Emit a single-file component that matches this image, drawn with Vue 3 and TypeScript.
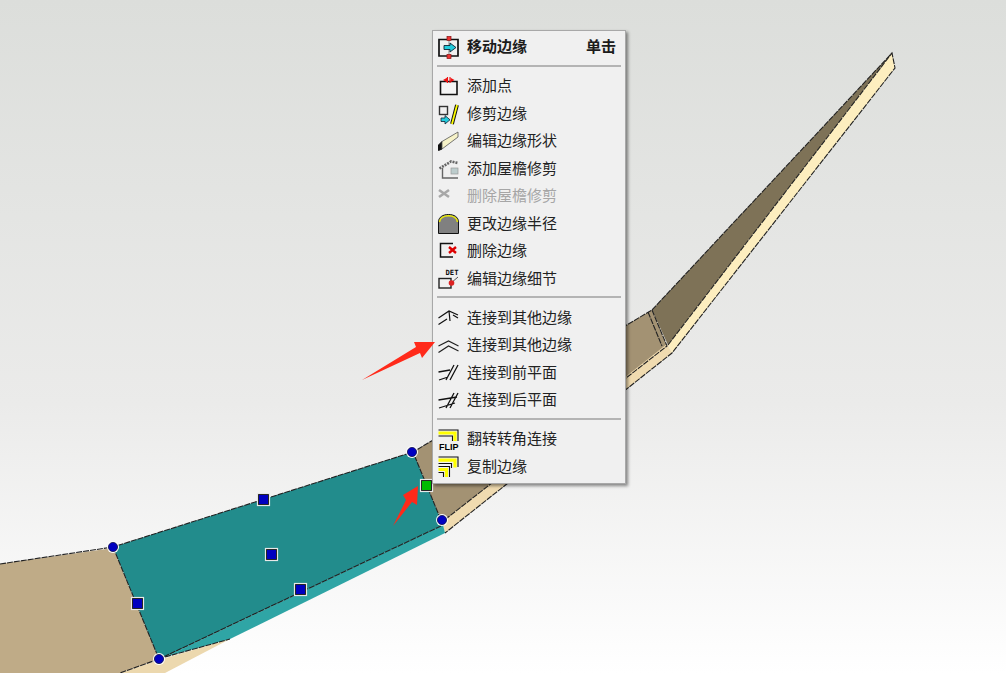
<script setup lang="ts">
type Row = { label?: string; icon?: string; hint?: string; head?: boolean; off?: boolean; sep?: boolean }

const faces = [
  { points: '0,564 113,548 159,659 120,673 0,673', fill: '#bfab87' },
  { points: '120,673 159,660 230,639 165,673', fill: '#ecd8ae' },
  { points: '413,452 652,310 667,346 442,522', fill: '#a39273' },
  { points: '442,522 667,344 672,353 445,533', fill: '#f0dbb0' },
  { points: '652,310 892,53 668,345', fill: '#7e7257' },
  { points: '668,345 892,53 895,68 672,353', fill: '#fdeebf' },
  { points: '165,657 443,525 445,533 230,639', fill: '#2fa5a5' },
  { points: '113,547 413,452 443,525 165,657 159,659', fill: '#228c8c' },
]

const edges = [
  '0,564 113,547 413,452 652,310 892,53 895,68 672,353 445,533',
  '113,547 159,659 443,525 413,452',
  '652,310 667,346 442,522',
  '668,345 892,53',
  '159,659 120,673',
  '648,312 662,346',
  '165,657 230,639',
]

const dots = [
  [113, 547],
  [412, 452],
  [442, 520],
  [159, 659],
]

const squares = [
  { x: 263, y: 499, fill: '#0000c0' },
  { x: 271, y: 554, fill: '#0000c0' },
  { x: 300, y: 589, fill: '#0000c0' },
  { x: 137, y: 603, fill: '#0000c0' },
  { x: 426, y: 485, fill: '#00bb00' },
]

const icons: Record<string, string> = {
  move: `<path d="M15 4V21" stroke="#888"/><path d="M13 4.5H5V21H13M17 4.5H24V21H17" fill="none" stroke="#111" stroke-width="1.7"/><rect x="13" y="1.5" width="4" height="4" fill="#e33" stroke="#811" stroke-width=".7"/><rect x="13" y="19.5" width="4" height="4" fill="#e33" stroke="#811" stroke-width=".7"/><path d="M10 10.5H16V8L22 12.5 16 17V14.5H10Z" fill="#2cd" stroke="#123" stroke-width=".9"/>`,
  add: `<path d="M6.5 7.5H23V20.5H6.5Z" fill="#f4f4f4" stroke="#111" stroke-width="1.6"/><path d="M13.5 3V9M16 3V9" stroke="#e11" stroke-width="1.1"/><path d="M9 6L13 3.8V8.2ZM20.5 6L16.5 3.8V8.2Z" fill="#e11"/>`,
  trim: `<rect x="5.5" y="4.5" width="8" height="8" fill="none" stroke="#333" stroke-width="1.4"/><path d="M7 16H11V13.5L16 17.8 11 22V19.5H7Z" fill="#2cd" stroke="#123" stroke-width=".8"/><path d="M23 3L18 22" stroke="#111" stroke-width="3.8"/><path d="M23 3L18 22" stroke="#ff0" stroke-width="1.8"/>`,
  shape: `<path d="M4.5 16L8 12.5V20L4.5 21.5Z" fill="#111" stroke="#111"/><path d="M8 12.5L24 3V8L8 20Z" fill="#f6f2c8" stroke="#555" stroke-width=".8"/>`,
  eave: `<path d="M5.5 11.5L17 4.5 24 6" fill="none" stroke="#666" stroke-width="2.6" stroke-dasharray="2 1"/><path d="M8.5 11V21H24" fill="none" stroke="#666" stroke-width="1.4"/><rect x="17" y="11" width="7" height="6" fill="#bccccc" stroke="#999" stroke-width=".7"/>`,
  cross: `<path d="M5 6L15 13M15 6L5 13" stroke="#a8a8a8" stroke-width="2.6"/>`,
  radius: `<path d="M4.5 21.5V10C4.5 5 9 2.5 14.5 2.5S24.5 5 24.5 10V21.5Z" fill="#808080" stroke="#111" stroke-width="1"/><path d="M5.5 10C6 6 10 3.8 14.5 3.8S23 6 23.5 10" fill="none" stroke="#ee0" stroke-width="1.5"/>`,
  remove: `<path d="M19 4.5H6.5V18H19" fill="none" stroke="#111" stroke-width="1.5"/><path d="M15 8L22 14M22 8L15 14" stroke="#d00" stroke-width="2.4"/>`,
  detail: `<text x="11.5" y="8" class="tiny">DET</text><rect x="5" y="11.5" width="12" height="9.5" fill="none" stroke="#222" stroke-width="1.4"/><path d="M17 16L24 10" stroke="#555"/><circle cx="17.5" cy="16" r="2.8" fill="#d22"/>`,
  other1: `<path d="M4.5 13L15 6 24 10M15 6L16 16M19 10L24 13M4.5 19.5L13 14" fill="none" stroke="#111" stroke-width="1.2"/>`,
  other2: `<path d="M4.5 13L14.5 8 24.5 13M4.5 19.5L14.5 13 24.5 18" fill="none" stroke="#222" stroke-width="1.2"/>`,
  front: `<path d="M24 5L16 20M20 5L12 20M4.5 12L16 10M5 20L14 17" fill="none" stroke="#111" stroke-width="1.3"/>`,
  back: `<path d="M24 5L16 20M20 5L12 20M4.5 12L23 9M5 20L21 15" fill="none" stroke="#111" stroke-width="1.3"/>`,
  flip: `<path d="M4.5 3H24V14M4.5 9H18.5V14" stroke="#111" fill="none" stroke-width="1.1"/><path d="M4.5 6H21V14" fill="none" stroke="#ff0" stroke-width="3.2"/><text x="14.8" y="22.5" class="flip">FLIP</text>`,
  copy: `<path d="M4.5 3H24V13M4.5 9.5H17.5V14" fill="none" stroke="#111" stroke-width="1.1"/><path d="M4.5 6.2H21V13.5" fill="none" stroke="#ff0" stroke-width="3.2"/><path d="M4.5 12.5H15.5V23M4.5 18.5H9.5V23" fill="none" stroke="#111" stroke-width="1.1"/><path d="M4.5 15.5H12.5V23" fill="none" stroke="#ff0" stroke-width="3.2"/>`,
}

const rows: Row[] = [
  { label: '移动边缘', icon: 'move', hint: '单击', head: true },
  { sep: true },
  { label: '添加点', icon: 'add' },
  { label: '修剪边缘', icon: 'trim' },
  { label: '编辑边缘形状', icon: 'shape' },
  { label: '添加屋檐修剪', icon: 'eave' },
  { label: '删除屋檐修剪', icon: 'cross', off: true },
  { label: '更改边缘半径', icon: 'radius' },
  { label: '删除边缘', icon: 'remove' },
  { label: '编辑边缘细节', icon: 'detail' },
  { sep: true },
  { label: '连接到其他边缘', icon: 'other1' },
  { label: '连接到其他边缘', icon: 'other2' },
  { label: '连接到前平面', icon: 'front' },
  { label: '连接到后平面', icon: 'back' },
  { sep: true },
  { label: '翻转转角连接', icon: 'flip' },
  { label: '复制边缘', icon: 'copy' },
]
</script>

<template>
  <div class="stage">
    <svg class="model" width="1006" height="673" viewBox="0 0 1006 673">
      <polygon v-for="f in faces" :key="f.points" :points="f.points" :fill="f.fill" />
      <polyline
        v-for="e in edges"
        :key="e"
        :points="e"
        fill="none"
        stroke="#222"
        stroke-width="1.1"
        stroke-dasharray="6 1"
      />
      <g v-for="d in dots" :key="d[0]">
        <circle :cx="d[0]" :cy="d[1]" r="6" fill="#fff" />
        <circle :cx="d[0]" :cy="d[1]" r="4.6" fill="#0000c0" stroke="#10104a" stroke-width=".8" />
      </g>
      <g v-for="s in squares" :key="s.x">
        <rect :x="s.x - 4.5" :y="s.y - 4.5" width="10" height="10" :fill="s.fill" stroke="#111" stroke-width="1" />
        <rect :x="s.x - 5.5" :y="s.y - 5.5" width="12" height="12" fill="none" stroke="#e8e8e8" stroke-width="1.2" />
      </g>
    </svg>

    <div class="menu">
      <template v-for="(row, i) in rows" :key="i">
        <div v-if="row.sep" class="sep"></div>
        <div v-else class="row" :class="{ head: row.head, off: row.off }">
          <svg class="icon" width="28" height="24" viewBox="0 0 28 24" v-html="icons[row.icon!]"></svg>
          <span class="label">{{ row.label }}</span>
          <span v-if="row.hint" class="hint">{{ row.hint }}</span>
        </div>
      </template>
    </div>

    <svg class="arrows" width="1006" height="673" viewBox="0 0 1006 673">
      <polygon points="362,380 416,347 414,342 435,342 422,358 420,353" fill="#ff2a1a" />
      <polygon points="393,526 406,500 403,495 418,486 417,505 412,502" fill="#ff2a1a" />
    </svg>
  </div>
</template>

<style scoped>
.stage {
  position: relative;
  width: 1006px;
  height: 673px;
  overflow: hidden;
  background: linear-gradient(#dcdedb, #ebebea 60%, #ffffff);
  font-family: "Noto Sans CJK SC", "Noto Sans", sans-serif;
}

.model,
.arrows {
  position: absolute;
  top: 0;
  left: 0;
}

.arrows {
  pointer-events: none;
}

.menu {
  position: absolute;
  top: 30px;
  left: 432px;
  width: 192px;
  padding: 2px 0 3px;
  background: #f0f0f0;
  border: 1px solid #a8a8a8;
  box-shadow: 2px 2px 3px rgba(0, 0, 0, 0.45);
}

.row {
  display: flex;
  align-items: center;
  height: 27.5px;
  padding-left: 1px;
  font-size: 15px;
  line-height: 1;
  color: #222;
}

.row.head {
  height: 28px;
  font-weight: 700;
  color: #1c1c1c;
}

.row.off {
  color: #a6a6a6;
}

.icon {
  flex: none;
}

.label {
  margin: 0 0 2.4px 5px;
}

.hint {
  margin: 0 9px 2.4px auto;
}

.sep {
  height: 2px;
  margin: 4px 4px 5.35px;
  background: #b4b4b4;
}

.icon :deep(.tiny) {
  font: 700 7.2px "DejaVu Sans Mono", monospace;
  fill: #111;
}

.icon :deep(.flip) {
  font: 700 9px "Liberation Sans", sans-serif;
  fill: #000;
  text-anchor: middle;
}
</style>

<style>
html,
body {
  margin: 0;
  background: #fff;
}
</style>
